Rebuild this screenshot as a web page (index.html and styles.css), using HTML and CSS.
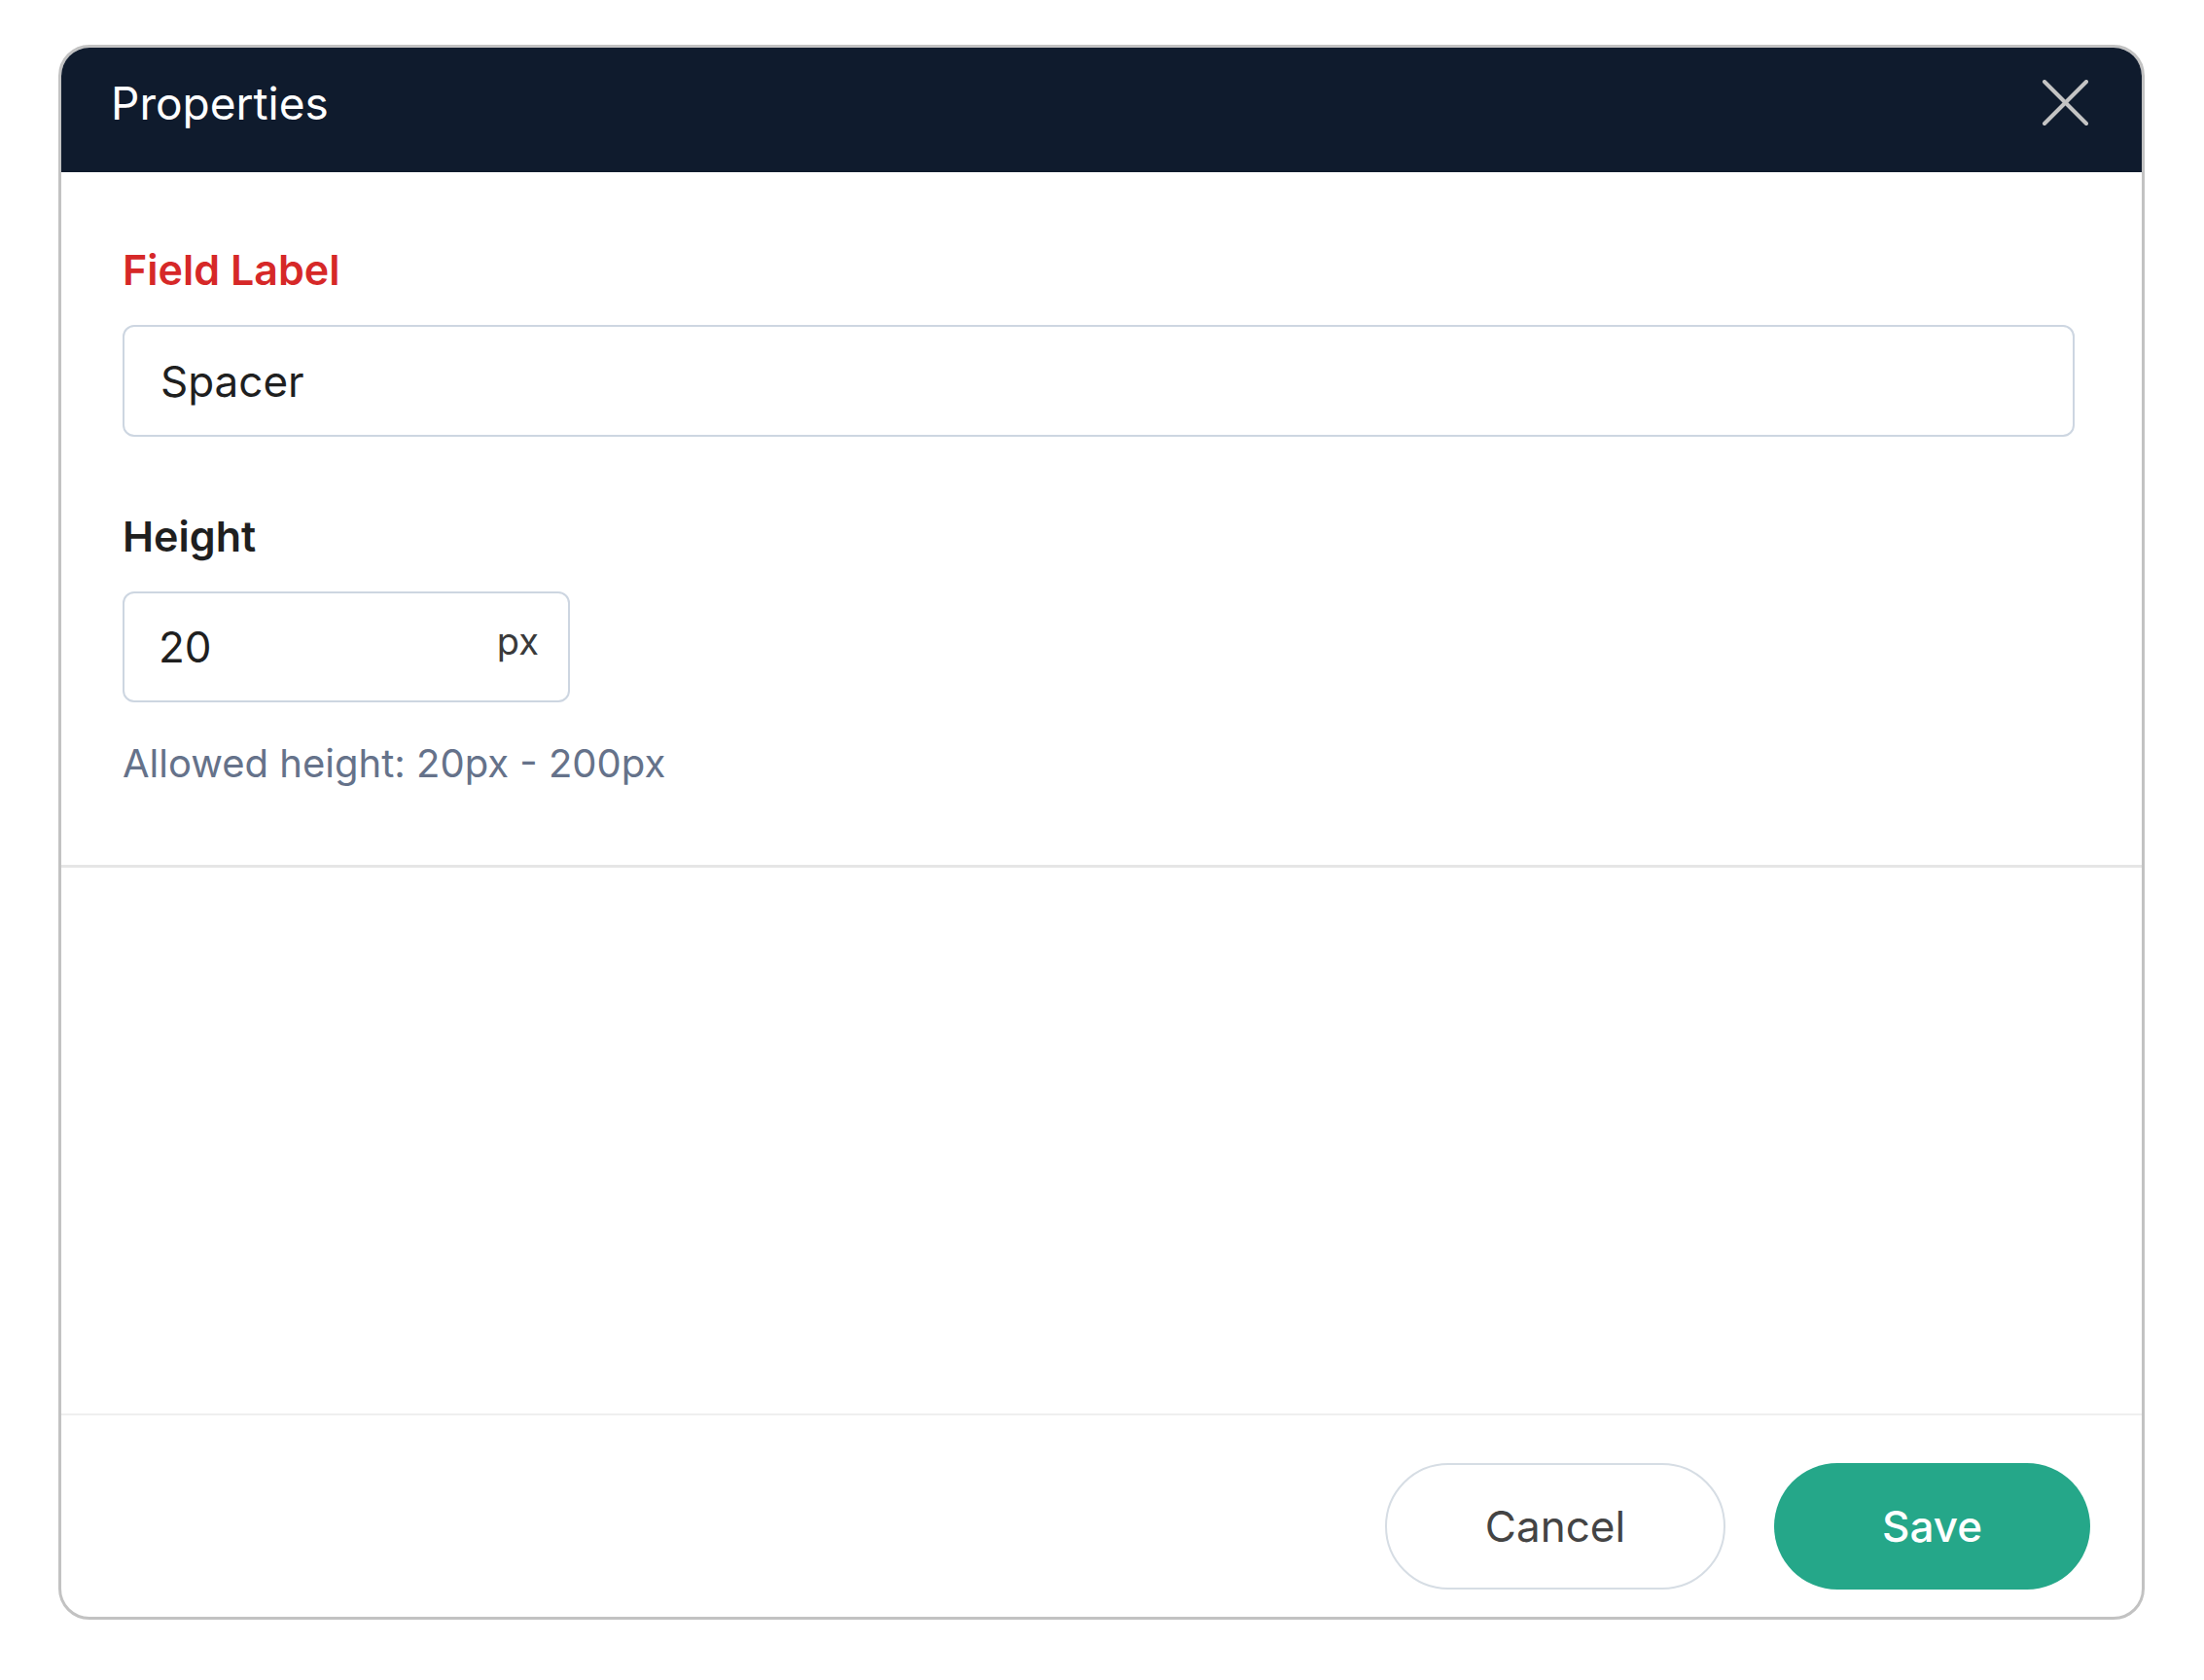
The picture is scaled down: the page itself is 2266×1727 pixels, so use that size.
FILE: index.html
```html
<!DOCTYPE html>
<html lang="en">
<head>
    <meta charset="UTF-8">
    <meta name="viewport" content="width=device-width, initial-scale=1.0">
    <title>Properties</title>
    <link rel="stylesheet" href="styles.css">
</head>
<body>
    <div class="dialog">
        <div class="dialog-header">
            <h2 class="dialog-title">Properties</h2>
            <button class="close-btn" aria-label="Close">
                <svg width="48" height="48" viewBox="0 0 48 48">
                    <line x1="3" y1="2" x2="46" y2="45" />
                    <line x1="46" y1="2" x2="3" y2="45" />
                </svg>
            </button>
        </div>

        <div class="dialog-body">
            <label class="field-label required">Field Label</label>
            <div class="text-input">Spacer</div>

            <label class="field-label height-label">Height</label>
            <div class="unit-input">
                <span class="unit-value">20</span>
                <span class="unit">px</span>
            </div>
            <p class="hint">Allowed height: 20px - 200px</p>
        </div>

        <div class="dialog-empty"></div>

        <div class="dialog-footer">
            <button class="btn btn-cancel">Cancel</button>
            <button class="btn btn-save">Save</button>
        </div>
    </div>
</body>
</html>
```

FILE: styles.css
```css
body {
    margin: 0;
    background-color: #fff;
    font-family: Inter, "Noto Sans", sans-serif;
}

.dialog {
    box-sizing: border-box;
    width: 2145px;
    height: 1619px;
    margin: 46px 0 0 60px;
    border: 3px solid #c2c2c2;
    border-radius: 32px;
    overflow: hidden;
    display: flex;
    flex-direction: column;
    background-color: #fff;
}

.dialog-header {
    box-sizing: border-box;
    height: 128px;
    padding: 0 55px 14px 51px;
    background-color: #0f1b2d;
    display: flex;
    align-items: center;
    justify-content: space-between;
}

.dialog-title {
    margin: 0;
    font-size: 46px;
    font-weight: 400;
    line-height: 1;
    color: #fff;
}

.close-btn {
    padding: 0;
    border: none;
    background: none;
    width: 48px;
    height: 48px;
}

.close-btn svg {
    display: block;
}

.close-btn line {
    stroke: #c4c4c4;
    stroke-width: 4;
    stroke-linecap: round;
}

.dialog-body {
    padding: 74px 69px 79px 63px;
    border-bottom: 3px solid #e6e6e6;
}

.field-label {
    display: block;
    font-size: 43px;
    font-weight: 600;
    line-height: 52px;
    color: #1f1f1f;
}

.field-label.required {
    color: #d62828;
}

.text-input,
.unit-input {
    box-sizing: border-box;
    margin-top: 31px;
    height: 115px;
    border: 2px solid #cdd6e1;
    border-radius: 12px;
    padding: 0 30px 0 37px;
    display: flex;
    align-items: center;
    font-size: 44px;
    color: #1f1f1f;
}

.height-label {
    margin-top: 76px;
}

.unit-input {
    width: 460px;
    height: 114px;
    padding-left: 35px;
    justify-content: space-between;
}

.unit {
    font-size: 38px;
    color: #3a3a3a;
    margin-bottom: 12px;
}

.hint {
    margin: 38px 0 0;
    font-size: 40px;
    line-height: 50px;
    color: #65728a;
}

.dialog-empty {
    flex: 1;
}

.dialog-footer {
    border-top: 2px solid #efefef;
    padding: 49px 53px 0 0;
    display: flex;
    justify-content: flex-end;
    gap: 50px;
    height: 158px;
}

.btn {
    height: 130px;
    border-radius: 65px;
    font-family: Inter, "Noto Sans", sans-serif;
    font-size: 44px;
    cursor: pointer;
}

.btn-cancel {
    width: 350px;
    border: 2px solid #d6dde4;
    background-color: #fff;
    color: #444;
}

.btn-save {
    width: 325px;
    border: none;
    background-color: #25a789;
    color: #fff;
    font-weight: 500;
}
```
